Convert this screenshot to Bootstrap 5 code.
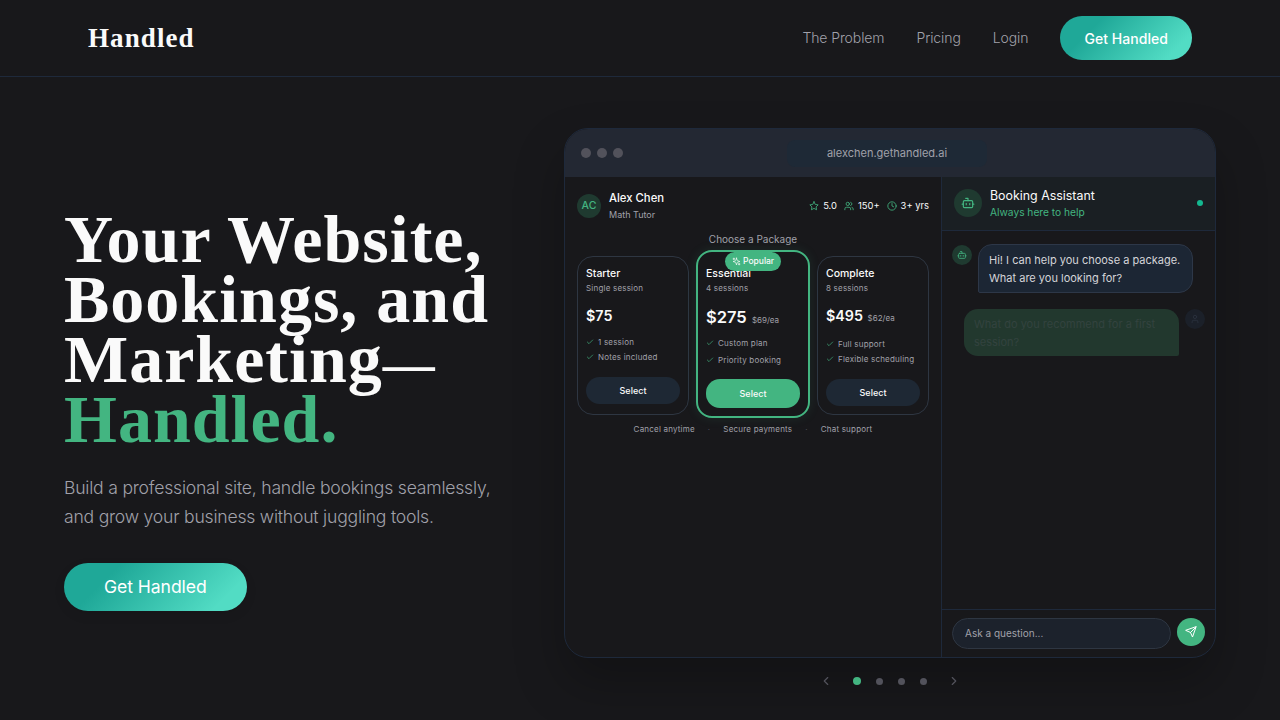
<!DOCTYPE html>
<html lang="en">
<head>
<meta charset="UTF-8">
<meta name="viewport" content="width=device-width, initial-scale=1.0">
<title>Handled</title>
<link href="https://cdn.jsdelivr.net/npm/bootstrap@5.3.0/dist/css/bootstrap.min.css" rel="stylesheet">
<style>
html, body { height: 720px; overflow: hidden; }
body { background: #18181b; font-family: Inter, "Liberation Sans", sans-serif; color: #fafafa; }
svg { display: block; flex: none; fill: none; stroke: currentColor; stroke-width: 2; stroke-linecap: round; stroke-linejoin: round; }

.top-nav { height: 77px; padding: 0 88px; border-bottom: 1px solid #1e293b; }
.brand-name { font-family: "Liberation Serif", serif; font-weight: 700; font-size: 27px; letter-spacing: 1.1px; color: #fafafa; text-decoration: none; }
.nav-item-link { color: #a1a1aa; font-size: 14px; letter-spacing: -.1px; font-weight: 300; text-decoration: none; margin-bottom: 2px; }
.nav-links { gap: 32px; }
.cta-btn { background: linear-gradient(135deg, #1fa898 25%, #52dcc4 85%); color: #fff; border: 0; font-weight: 500; }
.cta-small { font-size: 14px; height: 44px; padding: 0 24px; letter-spacing: .05px; }
.cta-large { font-size: 17.6px; height: 48px; padding: 0 40px; letter-spacing: -.08px; font-weight: 400; box-shadow: 0 4px 12px rgba(0,0,0,.08); }

.hero-grid { display: grid; grid-template-columns: 1fr 652px; column-gap: 64px; align-items: center; padding: 51px 64px 28px; }
.hero-title { font-family: "Liberation Serif", serif; font-weight: 700; font-size: 68px; line-height: 60px; letter-spacing: 1px; color: #fafafa; margin: 0 0 24px; }
.hero-title .title-dash { font-size: 52px; letter-spacing: 0; line-height: 0; }
.hero-title .title-end { color: #43b581; display: block; }
.hero-sub { color: #a1a1aa; font-size: 17.6px; line-height: 29px; letter-spacing: -.22px; margin: 0 0 32px; font-weight: 300; }

.mock-window { height: 530px; border: 1px solid #1e293b; border-radius: 24px; overflow: hidden; box-shadow: 0 25px 50px rgba(0,0,0,.25); background: #18181b; }
.mock-head { height: 48px; background: #232833; padding: 0 16px; }
.mock-dots { gap: 6px; }
.mock-dot { width: 10px; height: 10px; border-radius: 50%; background: #52525b; }
.mock-url { width: 200px; height: 27px; margin-left: 164px; background: #1e2936; border-radius: 8px; color: #a1a1aa; font-size: 11px; }
.mock-body { height: 480px; }
.pane-left { width: 377px; padding: 14px 12px; border-right: 1px solid #1e293b; }
.chat-pane { width: 274px; }

.avatar-round { width: 24px; height: 24px; border-radius: 50%; background: #1f3a30; color: #43b581; font-size: 10.5px; font-weight: 500; }
.tutor-name { font-size: 11.3px; line-height: 14px; font-weight: 500; color: #fafafa; }
.tutor-role { font-size: 9px; line-height: 12px; color: #a1a1aa; margin-top: 4px; }
.stat-row { gap: 7px; font-size: 9.4px; color: #fafafa; }
.stat-row svg { color: #43b581; }
.pick-label { font-size: 10px; line-height: 12px; color: #a1a1aa; text-align: center; margin: 12px 0 11px; }

.plan-grid { display: grid; grid-template-columns: repeat(3, 112px); column-gap: 8px; }
.plan-box { border: 1px solid #2e3642; border-radius: 16px; height: 159px; padding: 10px 8px; }
.plan-featured { position: relative; border: 2px solid #43b581; margin: -6px -1px -3px; height: 168px; padding: 15px 8px 9px; box-shadow: 0 0 12px rgba(67,181,129,.12); }
.plan-name { font-size: 10.5px; line-height: 13px; font-weight: 500; color: #fafafa; }
.plan-note { font-size: 8px; line-height: 10px; color: #a1a1aa; margin-top: 3px; letter-spacing: .2px; }
.plan-price { font-size: 14.3px; line-height: 18px; font-weight: 600; margin-top: 14px; color: #fafafa; }
.plan-featured .plan-price { font-size: 16.5px; line-height: 22px; margin-top: 13px; }
.plan-price small { font-size: 8px; font-weight: 400; color: #a1a1aa; margin-left: 1px; }
.plan-perk { font-size: 8px; line-height: 10px; color: #a1a1aa; gap: 4px; margin-top: 5px; letter-spacing: .2px; }
.plan-perk svg { color: #43b581; }
.plan-perks { margin-top: 12px; }
.plan-featured .plan-perks { margin-top: 6px; }
.plan-featured .plan-perk { margin-top: 7px; }
.plan-btn { display: block; width: 100%; height: 27px; border: 0; border-radius: 14px; background: #1e2834; color: #fafafa; font-size: 9px; font-weight: 500; margin-top: 15px; padding: 0; }
.plan-featured .plan-btn { background: #43b581; height: 29px; margin-top: 14px; }
.popular-tag { position: absolute; top: 0; left: 27px; height: 19px; padding: 0 7px; background: #43b581; border-radius: 10px; color: #fafafa; font-size: 8.5px; font-weight: 500; gap: 2px; }
.foot-notes { font-size: 8px; color: #a1a1aa; gap: 13px; margin-top: 9px; line-height: 10px; letter-spacing: .2px; }
.foot-sep { color: #52525b; }

.chat-head { height: 54px; padding: 0 12px 2px; background: #1a1f23; border-bottom: 1px solid #1e293b; }
.bot-round { width: 28px; height: 28px; border-radius: 50%; background: #1f3a30; color: #43b581; }
.chat-title { font-size: 12.4px; line-height: 15px; color: #fafafa; }
.chat-status { font-size: 10.2px; line-height: 12px; color: #43b581; margin-top: 3px; }
.live-dot { width: 6px; height: 6px; border-radius: 50%; background: #14b890; }
.chat-log { padding: 13px 10px; gap: 16px; }
.bot-mini { width: 20px; height: 20px; border-radius: 50%; background: #1f3a30; color: #43b581; margin-top: 1px; }
.bubble-bot { width: 215px; padding: 5.5px 10px; background: #1c2634; border: 1px solid #2d3748; border-radius: 14px 14px 14px 2px; font-size: 11px; line-height: 18px; color: #d4d4d8; }
.bubble-user { width: 215px; padding: 5.5px 10px; background: #22382e; border-radius: 14px 14px 2px 14px; font-size: 11px; line-height: 18px; color: #33433f; }
.user-mini { width: 20px; height: 20px; border-radius: 50%; background: #1b2029; color: #2b3340; }
.chat-foot { height: 48px; padding: 8px 10px 0; border-top: 1px solid #1e293b; }
.ask-field { flex: 1; height: 31px; background: #1c222c; border: 1px solid #2e3642; border-radius: 16px; padding: 0 12px; font-size: 10px; color: #a1a1aa; }
.send-round { width: 28px; height: 28px; border-radius: 50%; background: #43b581; color: #fff; border: 0; padding: 0; }

.slide-nav { height: 34px; padding-top: 12px; color: #52525b; }
.slide-dot { width: 7px; height: 7px; border-radius: 50%; background: #52525b; }
.slide-on { width: 8px; height: 8px; background: #43b581; }
.slide-dots { gap: 15px; margin: 0 20px; }
</style>
</head>
<body>
<nav class="top-nav d-flex align-items-center justify-content-between">
    <a class="brand-name" href="#">Handled</a>
    <div class="nav-links d-flex align-items-center">
        <a class="nav-item-link" href="#">The Problem</a>
        <a class="nav-item-link" href="#">Pricing</a>
        <a class="nav-item-link" href="#">Login</a>
        <button class="btn cta-btn cta-small rounded-pill">Get Handled</button>
    </div>
</nav>

<main class="hero-grid">
    <div>
        <h1 class="hero-title">Your Website, Bookings, and Marketing<span class="title-dash">—</span><span class="title-end">Handled.</span></h1>
        <p class="hero-sub">Build a professional site, handle bookings seamlessly, and grow your business without juggling tools.</p>
        <button class="btn cta-btn cta-large rounded-pill">Get Handled</button>
    </div>

    <div>
        <div class="mock-window">
            <div class="mock-head d-flex align-items-center">
                <div class="mock-dots d-flex">
                    <span class="mock-dot"></span><span class="mock-dot"></span><span class="mock-dot"></span>
                </div>
                <div class="mock-url d-flex align-items-center justify-content-center">alexchen.gethandled.ai</div>
            </div>
            <div class="mock-body d-flex">
                <div class="pane-left">
                    <div class="d-flex align-items-center justify-content-between">
                        <div class="d-flex align-items-center gap-2">
                            <div class="avatar-round d-flex align-items-center justify-content-center">AC</div>
                            <div>
                                <div class="tutor-name">Alex Chen</div>
                                <div class="tutor-role">Math Tutor</div>
                            </div>
                        </div>
                        <div class="stat-row d-flex align-items-center">
                            <span class="d-flex align-items-center gap-1"><svg width="10" height="10" viewBox="0 0 24 24"><polygon points="12 2 15.09 8.26 22 9.27 17 14.14 18.18 21.02 12 17.77 5.82 21.02 7 14.14 2 9.27 8.91 8.26 12 2"/></svg>5.0</span>
                            <span class="d-flex align-items-center gap-1"><svg width="10" height="10" viewBox="0 0 24 24"><path d="M16 21v-2a4 4 0 0 0-4-4H6a4 4 0 0 0-4 4v2"/><circle cx="9" cy="7" r="4"/><path d="M22 21v-2a4 4 0 0 0-3-3.87"/><path d="M16 3.13a4 4 0 0 1 0 7.75"/></svg>150+</span>
                            <span class="d-flex align-items-center gap-1"><svg width="10" height="10" viewBox="0 0 24 24"><circle cx="12" cy="12" r="10"/><polyline points="12 6 12 12 16 14"/></svg>3+ yrs</span>
                        </div>
                    </div>
                    <div class="pick-label">Choose a Package</div>
                    <div class="plan-grid">
                        <div class="plan-box">
                            <div class="plan-name">Starter</div>
                            <div class="plan-note">Single session</div>
                            <div class="plan-price">$75</div>
                            <div class="plan-perks">
                                <div class="plan-perk d-flex align-items-center"><svg width="8" height="8" viewBox="0 0 24 24"><path d="M20 6 9 17l-5-5"/></svg>1 session</div>
                                <div class="plan-perk d-flex align-items-center"><svg width="8" height="8" viewBox="0 0 24 24"><path d="M20 6 9 17l-5-5"/></svg>Notes included</div>
                            </div>
                            <button class="plan-btn">Select</button>
                        </div>
                        <div class="plan-box plan-featured">
                            <div class="popular-tag d-flex align-items-center"><svg width="9" height="9" viewBox="0 0 24 24"><path d="m12 3-1.912 5.813a2 2 0 0 1-1.275 1.275L3 12l5.813 1.912a2 2 0 0 1 1.275 1.275L12 21l1.912-5.813a2 2 0 0 1 1.275-1.275L21 12l-5.813-1.912a2 2 0 0 1-1.275-1.275L12 3Z"/><path d="M5 3v4"/><path d="M19 17v4"/><path d="M3 5h4"/><path d="M17 19h4"/></svg>Popular</div>
                            <div class="plan-name">Essential</div>
                            <div class="plan-note">4 sessions</div>
                            <div class="plan-price">$275 <small>$69/ea</small></div>
                            <div class="plan-perks">
                                <div class="plan-perk d-flex align-items-center"><svg width="8" height="8" viewBox="0 0 24 24"><path d="M20 6 9 17l-5-5"/></svg>Custom plan</div>
                                <div class="plan-perk d-flex align-items-center"><svg width="8" height="8" viewBox="0 0 24 24"><path d="M20 6 9 17l-5-5"/></svg>Priority booking</div>
                            </div>
                            <button class="plan-btn">Select</button>
                        </div>
                        <div class="plan-box">
                            <div class="plan-name">Complete</div>
                            <div class="plan-note">8 sessions</div>
                            <div class="plan-price">$495 <small>$62/ea</small></div>
                            <div class="plan-perks">
                                <div class="plan-perk d-flex align-items-center"><svg width="8" height="8" viewBox="0 0 24 24"><path d="M20 6 9 17l-5-5"/></svg>Full support</div>
                                <div class="plan-perk d-flex align-items-center"><svg width="8" height="8" viewBox="0 0 24 24"><path d="M20 6 9 17l-5-5"/></svg>Flexible scheduling</div>
                            </div>
                            <button class="plan-btn">Select</button>
                        </div>
                    </div>
                    <div class="foot-notes d-flex justify-content-center">
                        <span>Cancel anytime</span><span class="foot-sep">·</span><span>Secure payments</span><span class="foot-sep">·</span><span>Chat support</span>
                    </div>
                </div>

                <div class="chat-pane d-flex flex-column">
                    <div class="chat-head d-flex align-items-center">
                        <div class="bot-round d-flex align-items-center justify-content-center me-2"><svg width="14" height="14" viewBox="0 0 24 24"><path d="M12 8V4H8"/><rect width="16" height="12" x="4" y="8" rx="2"/><path d="M2 14h2"/><path d="M20 14h2"/><path d="M15 13v2"/><path d="M9 13v2"/></svg></div>
                        <div class="flex-grow-1">
                            <div class="chat-title">Booking Assistant</div>
                            <div class="chat-status">Always here to help</div>
                        </div>
                        <span class="live-dot"></span>
                    </div>
                    <div class="chat-log flex-grow-1 d-flex flex-column">
                        <div class="d-flex align-items-start" style="gap:6px">
                            <div class="bot-mini d-flex align-items-center justify-content-center"><svg width="10" height="10" viewBox="0 0 24 24"><path d="M12 8V4H8"/><rect width="16" height="12" x="4" y="8" rx="2"/><path d="M2 14h2"/><path d="M20 14h2"/><path d="M15 13v2"/><path d="M9 13v2"/></svg></div>
                            <div class="bubble-bot">Hi! I can help you choose a package. What are you looking for?</div>
                        </div>
                        <div class="d-flex align-items-start justify-content-end" style="gap:6px">
                            <div class="bubble-user">What do you recommend for a first session?</div>
                            <div class="user-mini d-flex align-items-center justify-content-center"><svg width="10" height="10" viewBox="0 0 24 24"><path d="M19 21v-2a4 4 0 0 0-4-4H9a4 4 0 0 0-4 4v2"/><circle cx="12" cy="7" r="4"/></svg></div>
                        </div>
                    </div>
                    <div class="chat-foot d-flex align-items-start" style="gap:6px">
                        <div class="ask-field d-flex align-items-center">Ask a question...</div>
                        <button class="send-round d-flex align-items-center justify-content-center"><svg width="12" height="12" viewBox="0 0 24 24"><path d="m22 2-7 20-4-9-9-4Z"/><path d="M22 2 11 13"/></svg></button>
                    </div>
                </div>
            </div>
        </div>
        <div class="slide-nav d-flex align-items-center justify-content-center">
            <svg width="14" height="14" viewBox="0 0 24 24"><path d="m15 18-6-6 6-6"/></svg>
            <div class="slide-dots d-flex align-items-center">
                <span class="slide-dot slide-on"></span><span class="slide-dot"></span><span class="slide-dot"></span><span class="slide-dot"></span>
            </div>
            <svg width="14" height="14" viewBox="0 0 24 24"><path d="m9 18 6-6-6-6"/></svg>
        </div>
    </div>
</main>
<script src="https://cdn.jsdelivr.net/npm/bootstrap@5.3.0/dist/js/bootstrap.bundle.min.js"></script>
</body>
</html>
